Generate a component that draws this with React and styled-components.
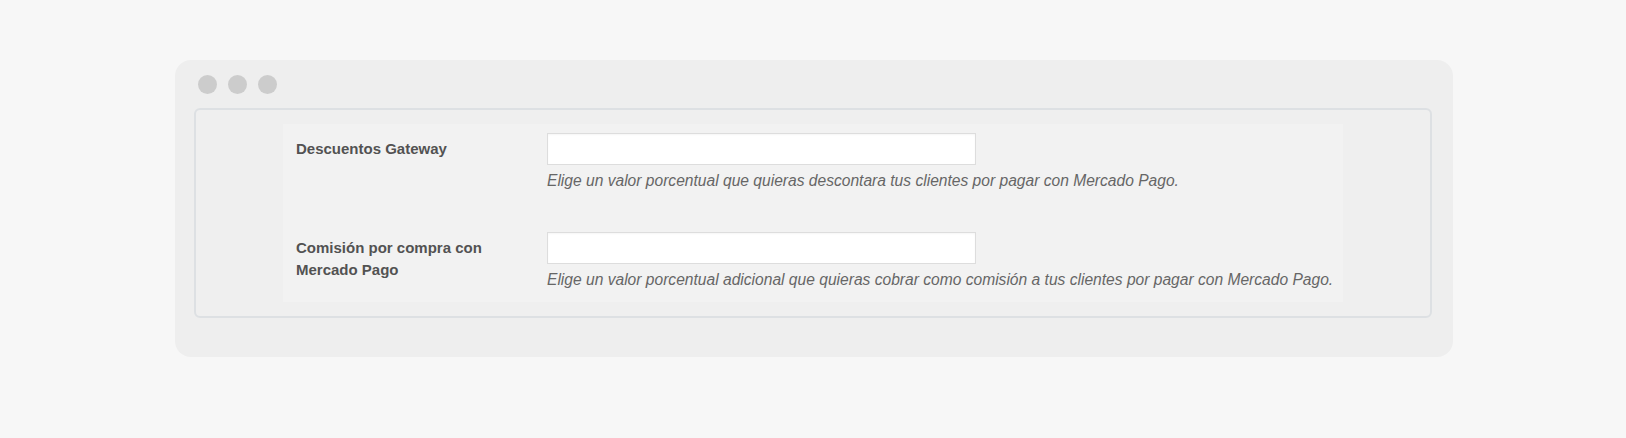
import React from "react";
import styled, { createGlobalStyle } from "styled-components";

const GlobalStyle = createGlobalStyle`
  html, body {
    margin: 0;
    padding: 0;
    background: #f7f7f7;
    font-family: "Liberation Sans", Arial, Helvetica, sans-serif;
  }
`;

const Page = styled.div`
  width: 1626px;
  height: 438px;
  padding: 60px 0 0 2px;
  box-sizing: border-box;
  display: flex;
  justify-content: center;
  align-items: flex-start;
`;

const Window = styled.div`
  width: 1278px;
  height: 297px;
  box-sizing: border-box;
  background: #eeeeee;
  border-radius: 16px;
  padding: 15px 21px 0 19px;
  display: flex;
  flex-direction: column;
`;

const Dots = styled.div`
  display: flex;
  gap: 11px;
  padding-left: 4px;
  height: 19px;
  margin-bottom: 14px;
`;

const Dot = styled.span`
  width: 19px;
  height: 19px;
  border-radius: 50%;
  background: #cccccc;
`;

const Frame = styled.div`
  height: 210px;
  box-sizing: border-box;
  border: 2px solid #dde0e3;
  border-radius: 6px;
  background: #efefef;
  display: flex;
  justify-content: center;
  padding-top: 14px;
`;

const Panel = styled.div`
  width: 1060px;
  height: 178px;
  box-sizing: border-box;
  background: #f2f2f2;
  padding: 9px 0 0;
  display: flex;
  flex-direction: column;
  gap: 40px;
`;

const Row = styled.div`
  display: flex;
  align-items: flex-start;
`;

const Label = styled.label`
  width: 264px;
  box-sizing: border-box;
  padding: 5px 40px 0 13px;
  font-size: 15px;
  font-weight: bold;
  line-height: 22px;
  color: #525252;
`;

const Field = styled.div`
  display: flex;
  flex-direction: column;
`;

const Input = styled.input`
  width: 429px;
  height: 32px;
  box-sizing: border-box;
  margin: 0;
  border: 1px solid #dddddd;
  background: #ffffff;
  box-shadow: inset 0 1px 2px rgba(0, 0, 0, 0.04);
  outline: none;
`;

const Description = styled.p`
  margin: 5px 0 0;
  font-size: 15.6px;
  font-style: italic;
  line-height: 22px;
  color: #666666;
`;

const fields = [
  {
    label: "Descuentos Gateway",
    help: "Elige un valor porcentual que quieras descontara tus clientes por pagar con Mercado Pago.",
  },
  {
    label: "Comisión por compra con Mercado Pago",
    help: "Elige un valor porcentual adicional que quieras cobrar como comisión a tus clientes por pagar con Mercado Pago.",
  },
];

const App = () => {
  return (
    <Page>
      <GlobalStyle />
      <Window>
        <Dots>
          <Dot />
          <Dot />
          <Dot />
        </Dots>
        <Frame>
          <Panel>
            {fields.map((f) => (
              <Row key={f.label}>
                <Label>{f.label}</Label>
                <Field>
                  <Input type="text" />
                  <Description>{f.help}</Description>
                </Field>
              </Row>
            ))}
          </Panel>
        </Frame>
      </Window>
    </Page>
  );
};

export default App;
